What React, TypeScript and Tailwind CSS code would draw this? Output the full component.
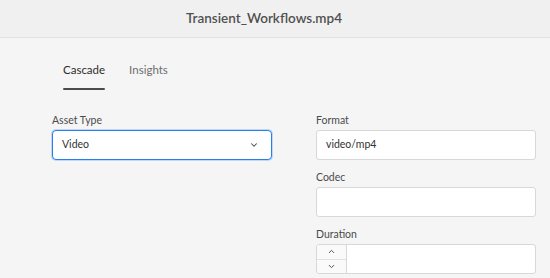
import { ChevronDown, ChevronUp } from "lucide-react";

function Field({ label, value }: { label: string; value?: string }) {
  return (
    <div className="flex flex-col">
      <label className="text-[10.5px] leading-[14px] text-[#4b4b4b] mb-[3px]">{label}</label>
      <div className="h-[30px] bg-white border border-[#d8d8d8] rounded-[3px] px-[9px] flex items-center text-[10.5px] text-[#323232]">
        {value}
      </div>
    </div>
  );
}

export default function App() {
  return (
    <div
      className="w-[550px] h-[278px] bg-[#f5f5f5] overflow-hidden"
      style={{ fontFamily: 'Lato, "Open Sans", sans-serif' }}
    >
      <div className="h-[38px] bg-[#f0f0f0] border-b border-[#e1e1e1] flex items-center justify-center pr-[22px]">
        <h1 className="text-[13.5px] font-semibold text-[#505050]">
          Transient_Workflows.mp4
        </h1>
      </div>

      <div className="pl-[63px] pt-[24px] flex gap-[24px] text-[11.5px]">
        <div className="flex flex-col">
          <span className="text-[#2c2c2c] leading-[16px]">Cascade</span>
          <span className="mt-[10px] h-[2px] bg-[#4b4b4b] rounded-full" />
        </div>
        <span className="text-[#6e6e6e] leading-[16px]">Insights</span>
      </div>

      <div className="flex pl-[52px] pt-[23px] gap-[44px]">
        <div className="w-[220px] flex flex-col">
          <label className="text-[10.5px] leading-[14px] text-[#4b4b4b] mb-[3px]">Asset Type</label>
          <div className="h-[30px] bg-white border border-[#2680eb] rounded-[4px] shadow-[0_0_0_1px_rgba(38,128,235,0.25)] pl-[9px] pr-[12px] flex items-center justify-between text-[10.5px] text-[#323232]">
            <span>Video</span>
            <ChevronDown size={10} strokeWidth={2.5} className="text-[#4b4b4b]" />
          </div>
        </div>

        <div className="w-[220px] flex flex-col gap-[10px]">
          <Field label="Format" value="video/mp4" />
          <Field label="Codec" />
          <div className="flex flex-col">
            <label className="text-[10.5px] leading-[14px] text-[#4b4b4b] mb-[3px]">Duration</label>
            <div className="h-[30px] bg-white border border-[#d8d8d8] rounded-[3px] flex overflow-hidden">
              <div className="w-[30px] flex flex-col border-r border-[#d8d8d8] bg-[#fafafa]">
                <div className="flex-1 flex items-center justify-center border-b border-[#e1e1e1]">
                  <ChevronUp size={9} strokeWidth={2.5} className="text-[#4b4b4b]" />
                </div>
                <div className="flex-1 flex items-center justify-center">
                  <ChevronDown size={9} strokeWidth={2.5} className="text-[#4b4b4b]" />
                </div>
              </div>
              <div className="flex-1" />
            </div>
          </div>
        </div>
      </div>
    </div>
  );
}
